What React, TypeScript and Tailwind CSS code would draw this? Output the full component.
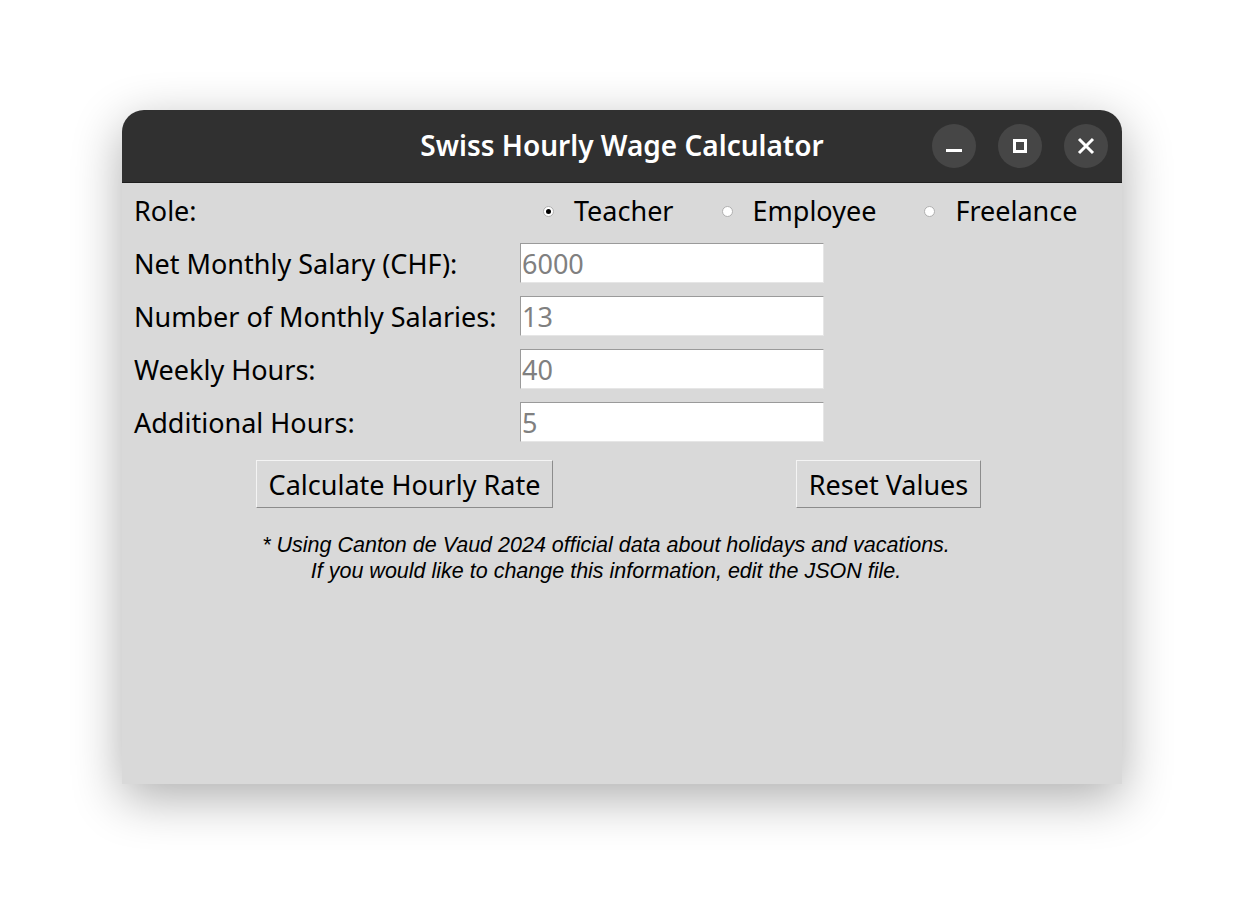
import { useState } from 'react';

const roles = ['Teacher', 'Employee', 'Freelance'];

const fields = [
  { label: 'Net Monthly Salary (CHF):', value: '6000' },
  { label: 'Number of Monthly Salaries:', value: '13' },
  { label: 'Weekly Hours:', value: '40' },
  { label: 'Additional Hours:', value: '5' },
];

function TitleButton({ children }: { children: React.ReactNode }) {
  return (
    <div className="flex h-[44px] w-[44px] items-center justify-center rounded-full bg-[#464646]">
      {children}
    </div>
  );
}

export default function App() {
  const [role, setRole] = useState('Teacher');

  const font = { fontFamily: '"Noto Sans", sans-serif' };

  return (
    <div className="min-h-[918px] w-full bg-white pt-[110px]" style={font}>
      <div className="mx-auto w-[1000px] rounded-t-[22px] shadow-[0_14px_50px_rgba(0,0,0,0.32)]">
        {/* title bar */}
        <div className="relative flex h-[73px] items-center justify-center rounded-t-[22px] border-b border-[#1e1e1e] bg-[#303030]">
          <span className="mb-[2px] text-[28px] font-semibold text-white">Swiss Hourly Wage Calculator</span>
          <div className="absolute right-[14px] top-[14px] flex gap-[22px]">
            <TitleButton>
              <div className="mt-[8px] h-[3px] w-[16px] bg-white" />
            </TitleButton>
            <TitleButton>
              <div className="h-[14px] w-[14px] border-[3px] border-white" />
            </TitleButton>
            <TitleButton>
              <svg width="18" height="18" viewBox="0 0 18 18">
                <path d="M2 2 L16 16 M16 2 L2 16" stroke="white" strokeWidth="3" />
              </svg>
            </TitleButton>
          </div>
        </div>

        {/* content */}
        <div className="h-[601px] bg-[#d9d9d9] pt-[8px] text-[27px] text-black">
          <div className="flex h-[40px] items-center pl-[12px]">
            <span className="w-[398px]">Role:</span>
            <div className="ml-[11px] flex items-center gap-[48px]">
              {roles.map((r) => (
                <label key={r} className="flex items-center gap-[20px]" onClick={() => setRole(r)}>
                  <span className="flex h-[11px] w-[11px] items-center justify-center rounded-full border border-[#b0b0b0] bg-white">
                    {role === r && <span className="h-[5px] w-[5px] rounded-full bg-black" />}
                  </span>
                  <span>{r}</span>
                </label>
              ))}
            </div>
          </div>

          <div className="mt-[12px] flex flex-col gap-[13px]">
            {fields.map((f) => (
              <div key={f.label} className="flex h-[40px] items-center pl-[12px]">
                <span className="w-[386px] pt-[2px]">{f.label}</span>
                <div className="flex h-[40px] w-[304px] items-center border-b border-l border-r border-t border-b-[#e6e6e6] border-l-[#9a9a9a] border-r-[#e6e6e6] border-t-[#9a9a9a] bg-white pl-[1px] pt-[2px] text-[#808080]">
                  {f.value}
                </div>
              </div>
            ))}
          </div>

          <div className="mt-[18px] flex pl-[134px]">
            <button className="h-[48px] w-[297px] border border-b-[#8c8c8c] border-l-[#f4f4f4] border-r-[#8c8c8c] border-t-[#f4f4f4] bg-[#d9d9d9] pt-[2px] text-center">
              Calculate Hourly Rate
            </button>
            <button className="ml-[243px] h-[48px] w-[185px] border border-b-[#8c8c8c] border-l-[#f4f4f4] border-r-[#8c8c8c] border-t-[#f4f4f4] bg-[#d9d9d9] pt-[2px] text-center">
              Reset Values
            </button>
          </div>

          <div
            className="mt-[24px] pr-[32px] text-center text-[21.5px] italic leading-[26px]"
            style={{ fontFamily: '"Liberation Sans", Arial, sans-serif' }}
          >
            <p>* Using Canton de Vaud 2024 official data about holidays and vacations.</p>
            <p>If you would like to change this information, edit the JSON file.</p>
          </div>
        </div>
      </div>
    </div>
  );
}
